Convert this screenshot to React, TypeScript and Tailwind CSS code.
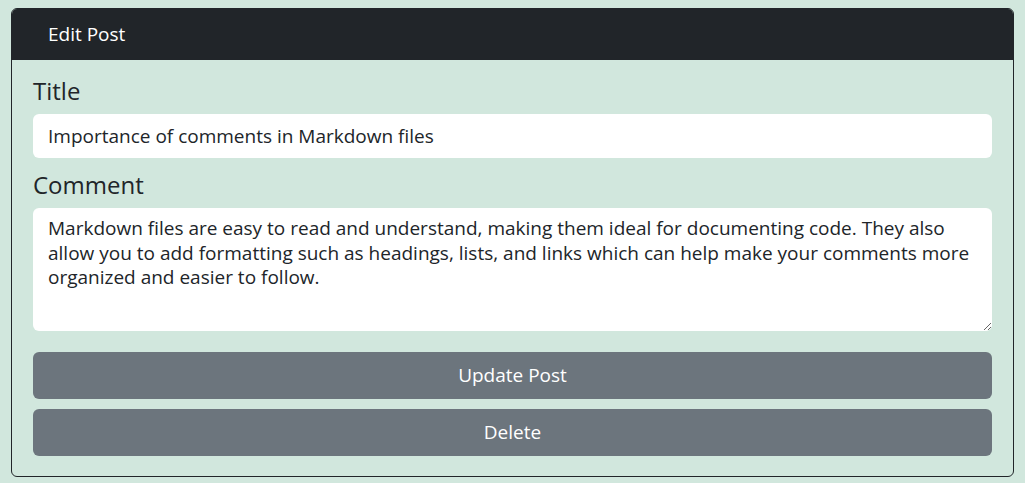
export default function App() {
  return (
    <div className="min-h-[483px] bg-[#d1e7dd] pt-2 pl-[11px] pr-[11px] font-['Open_Sans',sans-serif] text-[#212529]">
      <div className="rounded-md border border-[#212529] overflow-hidden">
        <div className="h-[51px] bg-[#212529] pl-9 flex items-center text-[19px] text-white">
          Edit Post
        </div>
        <div className="px-[21px] pt-[14px] pb-[20px]">
          <label className="block text-[24px] leading-[34px] mb-[6px]">Title</label>
          <input
            defaultValue="Importance of comments in Markdown files"
            className="block w-full h-11 rounded-md bg-white px-[15px] text-[19px] outline-none"
          />
          <label className="block text-[24px] leading-[34px] mt-[10px] mb-[6px]">Comment</label>
          <textarea
            rows={4}
            defaultValue="Markdown files are easy to read and understand, making them ideal for documenting code. They also allow you to add formatting such as headings, lists, and links which can help make your comments more organized and easier to follow."
            className="block w-full h-[123px] rounded-md bg-white px-[15px] py-[8px] text-[19px] leading-[24.5px] outline-none resize-y"
          />
          <button className="mt-[21px] block w-full h-[47px] rounded-md bg-[#6c757d] text-white text-[19px]">
            Update Post
          </button>
          <button className="mt-[10px] block w-full h-[47px] rounded-md bg-[#6c757d] text-white text-[19px]">
            Delete
          </button>
        </div>
      </div>
    </div>
  );
}
